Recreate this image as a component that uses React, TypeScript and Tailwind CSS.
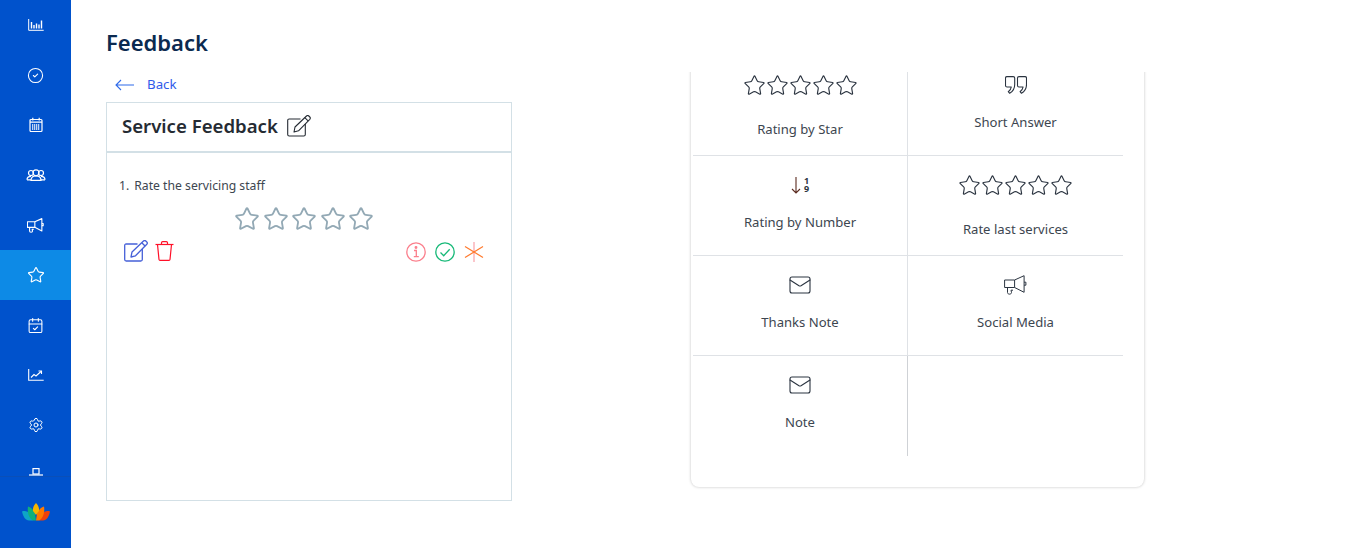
import { Star, CircleCheck, CalendarCheck, Settings, Mail } from 'lucide-react';
import type { ReactNode } from 'react';

const font = { fontFamily: '"Noto Sans", "Open Sans", sans-serif' };

function ChartIcon() {
  return (
    <svg width="16" height="12" viewBox="0 0 16 12" fill="none" stroke="currentColor" strokeWidth="1">
      <path d="M0.700 0v11.300h15" />
      <path d="M3.500 3v6.500M6 6v3.500M8.500 4.500v5M11 5.500v4M13.500 1.500v8" strokeWidth="1.400" />
    </svg>
  );
}

function CalendarGridIcon() {
  return (
    <svg width="16" height="16" viewBox="0 0 16 16" fill="none" stroke="currentColor" strokeWidth="1.200">
      <rect x="2" y="2.500" width="12" height="12" rx="1" />
      <path d="M4.800 0.800v2.800M11.200 0.800v2.800M2 5.200h12" />
      <path d="M4 8h8M4 10h8M4 12h8" strokeWidth="1.300" strokeDasharray="1.300 0.700" />
    </svg>
  );
}

function GroupIcon() {
  return (
    <svg width="20" height="12" viewBox="0 0 20 12" fill="none" stroke="currentColor" strokeWidth="1.200">
      <circle cx="5" cy="4" r="2.500" />
      <circle cx="15" cy="4" r="2.500" />
      <circle cx="10" cy="3.800" r="3" />
      <path d="M1 10.800c0-2.500 1.500-3.500 4-3.500M19 10.800c0-2.500-1.500-3.500-4-3.500" />
      <path d="M1 10.800h4M15 10.800h4" />
      <path d="M5 11.300c0-3 2-4.500 5-4.500s5 1.500 5 4.500z" />
    </svg>
  );
}

function Megaphone({ width, height, stroke }: { width: number; height: number; stroke: number }) {
  return (
    <svg width={width} height={height} viewBox="0 0 23 20" fill="none" stroke="currentColor" strokeWidth={stroke} strokeLinejoin="round">
      <path d="M0.600 5h10l9.500-4.300v16.600L10.600 12.500h-10z" />
      <path d="M10.600 5v7.500" />
      <path d="M3.500 12.500v5c0 2.200 4 2.200 4 0l-0.500-2.300h2" />
      <path d="M20.100 7.200h1.800v3h-1.800" />
    </svg>
  );
}

function TrendIcon() {
  return (
    <svg width="16" height="12" viewBox="0 0 16 12" fill="none" stroke="currentColor" strokeWidth="1.100">
      <path d="M0.700 0v11.300h15" />
      <path d="M3 8.500l3-3 2 1.500 5-4.500" />
      <path d="M10.500 2h3v3" />
    </svg>
  );
}

function ClippedIcon() {
  return (
    <svg width="14" height="8" viewBox="0 0 14 8" fill="none" stroke="currentColor" strokeWidth="1.200">
      <rect x="4" y="0.600" width="6" height="5.400" />
      <path d="M0 7h14" />
    </svg>
  );
}

function Lotus() {
  return (
    <svg width="28" height="18" viewBox="0 0 28 18">
      <path d="M0 8.500c3-1 6 0 8 2l3 7H7c-3.500 0-6-4-7-9z" fill="#0ea5c6" />
      <path d="M28 8.500c-3-1-6 0-8 2l-3 7h4c3.500 0 6-4 7-9z" fill="#f0410a" />
      <path d="M6 3.500c3 1 6 4 7 7l1 7h-3c-4-2-6-8-5-14z" fill="#10b07a" />
      <path d="M22 3.500c-3 1-6 4-7 7l-1 7h3c4-2 6-8 5-14z" fill="#ff7a00" />
      <path d="M14 0c2 2 3.500 5 3 8l-3 4-3-4c-.5-3 1-6 3-8z" fill="#f7b500" />
    </svg>
  );
}

function QuoteIcon() {
  return (
    <svg width="22" height="18" viewBox="0 0 22 18" fill="none" stroke="currentColor" strokeWidth="1.100" strokeLinejoin="round">
      <path d="M2 0.600h6.200c1 0 1.500.5 1.500 1.500v6.400c0 3.800-1.800 7-5 8.800l-1.400-1.600c1.700-1.200 2.700-2.700 3-4.700H2c-1 0-1.500-.5-1.500-1.500V2.100c0-1 .5-1.500 1.500-1.500z" />
      <path d="M14 0.600h6c1 0 1.500.5 1.500 1.500v6.400c0 3.800-1.800 7-5 8.800l-1.400-1.600c1.700-1.200 2.700-2.700 3-4.700H14c-1 0-1.500-.5-1.500-1.500V2.100c0-1 .5-1.500 1.500-1.500z" />
    </svg>
  );
}

function EditIcon({ stroke }: { stroke: number }) {
  return (
    <svg width="24" height="22" viewBox="0 0 24 22" fill="none" stroke="currentColor" strokeWidth={stroke} strokeLinejoin="round">
      <path d="M13.500 4H2.200C1.200 4 .7 4.500 .7 5.500v14c0 1 .5 1.500 1.500 1.500h14.600c1 0 1.500-.5 1.500-1.500V9" />
      <path d="M7 17l1-5L19.500 1c.8-.7 1.600-.7 2.300 0l1 1c.7.700.7 1.500 0 2.300L11.500 15.800z" />
      <path d="M17.800 2.700l3.500 3.500" />
    </svg>
  );
}

function TrashIcon() {
  return (
    <svg width="19" height="20" viewBox="0 0 19 20" fill="none" stroke="currentColor" strokeWidth="1.200" strokeLinejoin="round">
      <path d="M0.500 3.500h18" />
      <path d="M6.500 3.500V1.800c0-.8.400-1.200 1.200-1.200h3.600c.8 0 1.200.4 1.200 1.200v1.700" />
      <path d="M2.500 3.500l1.500 15c.1.600.4.900 1 .9h9c.6 0 .9-.3 1-.9l1.500-15" />
    </svg>
  );
}

function InfoIcon() {
  return (
    <svg width="20" height="20" viewBox="0 0 20 20" fill="none" stroke="#fb7f8c" strokeWidth="1.300">
      <circle cx="10" cy="10" r="9.200" />
      <path d="M8 8.500h2.300v6M7.800 14.700h5" />
      <circle cx="10" cy="5.500" r="0.800" fill="#fb7f8c" />
    </svg>
  );
}

function CheckCircle() {
  return (
    <svg width="20" height="20" viewBox="0 0 20 20" fill="none" stroke="#17b978" strokeWidth="1.300">
      <circle cx="10" cy="10" r="9.200" />
      <path d="M5.500 10.500l3.200 3.200 6-6.500" />
    </svg>
  );
}

function AsteriskIcon() {
  return (
    <svg width="20" height="20" viewBox="0 0 20 20" fill="none" strokeWidth="1.200">
      <path d="M10 0v20" stroke="#f9a0a8" />
      <path d="M1 4.500l18 11M1 15.500l18-11" stroke="#ff7a2e" />
    </svg>
  );
}

function StarRow({ size, gap, color, stroke }: { size: number; gap: string; color: string; stroke: number }) {
  return (
    <div className={`flex ${gap} ${color}`}>
      {[1, 2, 3, 4, 5].map((n) => (
        <Star key={n} size={size} strokeWidth={stroke} />
      ))}
    </div>
  );
}

const navItems: { icon: ReactNode; active?: boolean }[] = [
  { icon: <ChartIcon /> },
  { icon: <CircleCheck size={17} strokeWidth={1.500} /> },
  { icon: <CalendarGridIcon /> },
  { icon: <GroupIcon /> },
  { icon: <Megaphone width={17} height={15} stroke={1.500} /> },
  { icon: <Star size={18} strokeWidth={1.500} />, active: true },
  { icon: <CalendarCheck size={17} strokeWidth={1.500} /> },
  { icon: <TrendIcon /> },
  { icon: <Settings size={16} strokeWidth={1.500} /> },
];

function Sidebar() {
  return (
    <aside className="w-[71px] h-[548px] shrink-0 bg-[#0052cc] flex flex-col text-white">
      <nav className="h-[476px] overflow-hidden">
        {navItems.map((item, i) => (
          <div key={i} className={`h-[50px] flex items-center justify-center ${item.active ? 'bg-[#0d8ae6]' : ''}`}>
            {item.icon}
          </div>
        ))}
        <div className="h-[26px] flex justify-center pt-[18px]">
          <ClippedIcon />
        </div>
      </nav>
      <div className="flex-1 border-t border-[#0a4fb8] flex items-center justify-center pb-[2px]">
        <Lotus />
      </div>
    </aside>
  );
}

function Cell({ icon, label, tall, right, last }: { icon: ReactNode; label: string; tall?: boolean; right?: boolean; last?: boolean }) {
  return (
    <div className={`h-[100px] flex flex-col items-center pt-[18px] ${right ? '' : 'border-r border-[#cfd2d6]'} ${last ? '' : 'border-b border-[#dfe2e6]'}`}>
      <div className="h-[22px] flex items-center justify-center text-[#2b3440]">{icon}</div>
      <span className={`text-[13.100px] leading-[18px] text-[#3d4650] ${tall ? 'mt-[24px]' : 'mt-[17px]'}`}>{label}</span>
    </div>
  );
}

export default function App() {
  return (
    <div className="flex w-[1349px] h-[548px] overflow-hidden bg-white" style={font}>
      <Sidebar />
      <main className="flex-1 pl-[35px]">
        <h1 className="h-[72px] pt-[26px] text-[22px] leading-[32px] font-semibold text-[#0b2a50]">Feedback</h1>
        <div className="flex items-start">
          <div className="w-[406px]">
            <div className="h-[26px] mb-[4px] flex items-center pl-[9px] gap-[13px] text-[#2f5bea] text-[13.300px]">
              <svg width="19" height="12" viewBox="0 0 19 12" fill="none" stroke="#2f6bea" strokeWidth="1.100">
                <path d="M19 6H1M6 1L1 6l5 5" />
              </svg>
              <span>Back</span>
            </div>
            <section className="h-[399px] border border-[#d3e0e6]">
              <div className="h-[50px] pb-[2px] border-b-2 border-[#d3e0e6] flex items-center pl-[15px] gap-[9px]">
                <span className="text-[18.600px] font-semibold text-[#252b33]">Service Feedback</span>
                <span className="text-[#252b33]">
                  <EditIcon stroke={1.100} />
                </span>
              </div>
              <div className="pl-[12px] pr-[26px] pt-[24px]">
                <p className="text-[12.200px] leading-[18px] text-[#3d4650]">
                  <span className="mr-[5px]">1.</span>Rate the servicing staff
                </p>
                <div className="flex justify-center mt-[11px] ml-[4px]">
                  <StarRow size={26} gap="gap-[2.500px]" color="text-[#93a9b5]" stroke={1.700} />
                </div>
                <div className="flex items-center justify-between mt-[8px] ml-[5px]">
                  <div className="flex items-center gap-[7px]">
                    <span className="text-[#4660d8]">
                      <EditIcon stroke={1.300} />
                    </span>
                    <span className="text-[#ff1028]">
                      <TrashIcon />
                    </span>
                  </div>
                  <div className="flex items-center gap-[9px] mt-[2px] pr-[1px]">
                    <InfoIcon />
                    <CheckCircle />
                    <AsteriskIcon />
                  </div>
                </div>
              </div>
            </section>
          </div>
          <div className="ml-[175px] w-[461px] h-[420px] overflow-hidden px-[4px]">
            <div className="-mt-[16px] h-[431px] bg-white rounded-b-[8px] shadow-[0_0_3px_rgba(0,0,0,0.25)] pl-[2px]">
              <div className="grid grid-cols-[215px_215px]">
                <Cell icon={<StarRow size={23} gap="gap-0" color="" stroke={1.200} />} label="Rating by Star" tall />
                <Cell icon={<QuoteIcon />} label="Short Answer" right />
                <Cell
                  icon={
                    <div className="flex items-center gap-[3px]">
                      <svg width="10" height="18" viewBox="0 0 10 18" fill="none" stroke="#5b2b20" strokeWidth="1.100">
                        <path d="M5 1v16M1 13l4 4 4-4" />
                      </svg>
                      <div className="flex flex-col text-[9px] leading-[8px] font-bold text-[#2b3440]">
                        <span>1</span>
                        <span>9</span>
                      </div>
                    </div>
                  }
                  label="Rating by Number"
                />
                <Cell icon={<StarRow size={23} gap="gap-0" color="" stroke={1.200} />} label="Rate last services" tall right />
                <Cell icon={<Mail size={24} strokeWidth={1.100} />} label="Thanks Note" />
                <Cell icon={<Megaphone width={23} height={20} stroke={1} />} label="Social Media" right />
                <Cell icon={<Mail size={24} strokeWidth={1.100} />} label="Note" last />
                <div className="h-[100px]" />
              </div>
            </div>
          </div>
        </div>
      </main>
    </div>
  );
}
